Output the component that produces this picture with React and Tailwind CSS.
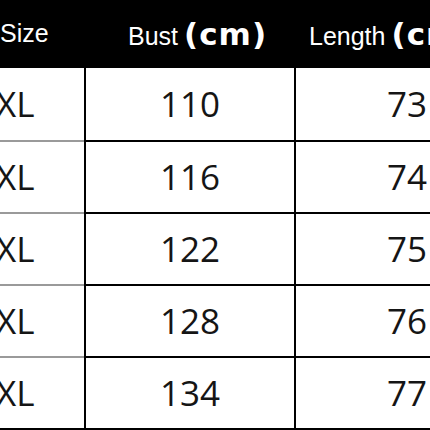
const rows = [
  { size: "XL", bust: "110", length: "73" },
  { size: "XL", bust: "116", length: "74" },
  { size: "XL", bust: "122", length: "75" },
  { size: "XL", bust: "128", length: "76" },
  { size: "XL", bust: "134", length: "77" },
];

function HeaderLabel({ label }) {
  return (
    <span className="flex items-baseline whitespace-nowrap">
      <span className="font-['Liberation_Sans',Arial,sans-serif] text-[25px]">{label}</span>
      <span className="ml-[6px] font-['DejaVu_Sans',sans-serif] font-bold text-[31px] tracking-[1px]">(cm)</span>
    </span>
  );
}

export default function App() {
  return (
    <div className="w-[430px] h-[430px] overflow-hidden bg-white">
      <div className="w-[520px]">
        {/* encabezado */}
        <div className="flex h-[68px] bg-black text-white">
          <div className="w-[86px] flex items-center font-['Liberation_Sans',Arial,sans-serif] text-[25px]">
            Size
          </div>
          <div className="w-[212px] flex items-center pl-[42px]">
            <HeaderLabel label="Bust" />
          </div>
          <div className="w-[222px] flex items-center pl-[11px]">
            <HeaderLabel label="Length" />
          </div>
        </div>

        {/* filas */}
        {rows.map((row, i) => (
          <div key={i} className="flex h-[72px] font-['Open_Sans',sans-serif] text-[35px] text-[#151515]">
            <div
              className={`w-[84px] flex items-center ${i > 0 ? "border-t-2 border-[#9a9a9a]" : ""}`}
            >
              <span className="-ml-[4px]">{row.size}</span>
            </div>
            <div
              className={`w-[212px] flex items-center justify-center border-x-2 border-black ${i > 0 ? "border-t-2" : ""}`}
            >
              {row.bust}
            </div>
            <div
              className={`w-[222px] flex items-center justify-center ${i > 0 ? "border-t-2 border-black" : ""}`}
            >
              {row.length}
            </div>
          </div>
        ))}
        <div className="h-[2px] bg-black" />
      </div>
    </div>
  );
}
